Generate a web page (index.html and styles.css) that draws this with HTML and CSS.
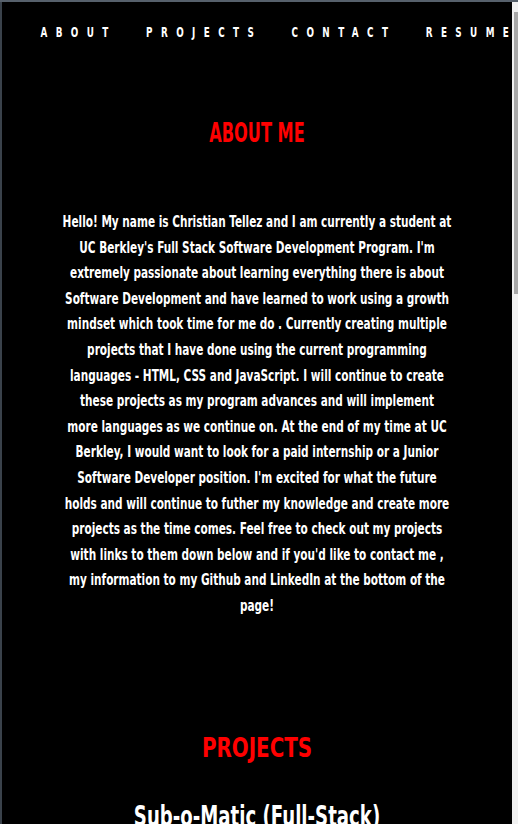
FILE: index.html
```html
<!DOCTYPE html>
<html lang="en">
<head>
<meta charset="utf-8">
<title>Christian Tellez</title>
<link rel="stylesheet" href="styles.css">
</head>
<body>
<div class="frame">
  <div class="page">
    <nav class="nav">
      <a href="#about">ABOUT</a>
      <a href="#projects">PROJECTS</a>
      <a href="#contact">CONTACT</a>
      <a href="#resume">RESUME</a>
    </nav>
    <section class="about" id="about">
      <h2 class="section-title">ABOUT ME</h2>
      <div class="about-wrap">
        <p class="about-text">Hello! My name is Christian Tellez and I am currently a student at UC Berkley's Full Stack Software Development Program. I'm extremely passionate about learning everything there is about Software Development and have learned to work using a growth mindset which took time for me do . Currently creating multiple projects that I have done using the current programming languages - HTML, CSS and JavaScript. I will continue to create these projects as my program advances and will implement more&nbsp;languages as we continue on. At the end of my time at UC Berkley, I would want to look for a paid internship or a Junior Software Developer position. I'm excited for what the future holds and will continue to futher my knowledge and create more projects as the time comes. Feel free to check out my projects with links to them down below and if you'd like to contact me , my information to my Github and LinkedIn at the bottom of the page!</p>
      </div>
    </section>
    <section class="projects" id="projects">
      <h2 class="section-title section-title--wide">PROJECTS</h2>
      <h3 class="project-title">Sub-o-Matic (Full-Stack)</h3>
    </section>
  </div>
  <div class="scrollbar"><div class="thumb"></div></div>
</div>
</body>
</html>
```
FILE: styles.css
```css
html, body {
  margin: 0;
  padding: 0;
  height: 824px;
  overflow: hidden;
  background: #000;
}
body {
  font-family: "DejaVu Sans Condensed", "DejaVu Sans", sans-serif;
  color: #fff;
}
.frame {
  display: flex;
  height: 822px;
  border-top: 2px solid #56606b;
}
.page {
  flex: 1;
  min-width: 0;
  border-left: 2px solid #3a424b;
  background: #000;
}
.scrollbar {
  width: 6px;
  background: #f1f1f1;
  padding-top: 10px;
  display: flex;
  justify-content: flex-end;
  align-items: flex-start;
}
.thumb {
  width: 4px;
  height: 282px;
  background: #a8a8a8;
}
.nav {
  display: flex;
  width: max-content;
  gap: 42px;
  padding: 22px 0 0 55px;
  line-height: 16px;
  transform: scaleX(0.7);
  transform-origin: left top;
  white-space: nowrap;
}
.nav a {
  color: #fff;
  text-decoration: none;
  font-weight: bold;
  font-size: 14px;
  letter-spacing: 12px;
}
.nav a:last-child {
  margin-right: -12px;
}
.section-title {
  color: #ff0000;
  font-weight: bold;
  font-size: 26px;
  line-height: 30px;
  text-align: center;
  margin: 0;
  transform: scaleX(0.69);
}
.section-title--wide {
  transform: scaleX(0.85);
}
.about {
  padding-top: 78px;
}
.about-wrap {
  display: flex;
  justify-content: center;
  margin-top: 61px;
}
.about-text {
  flex: 0 0 540px;
  margin: 0;
  text-align: center;
  font-weight: bold;
  font-size: 16px;
  line-height: 25.6px;
  transform: scaleX(0.73);
}
.projects {
  padding-top: 114px;
}
.project-title {
  margin: 38px 0 0;
  text-align: center;
  font-weight: bold;
  font-size: 28px;
  line-height: 32px;
  transform: scaleX(0.72);
}
```
